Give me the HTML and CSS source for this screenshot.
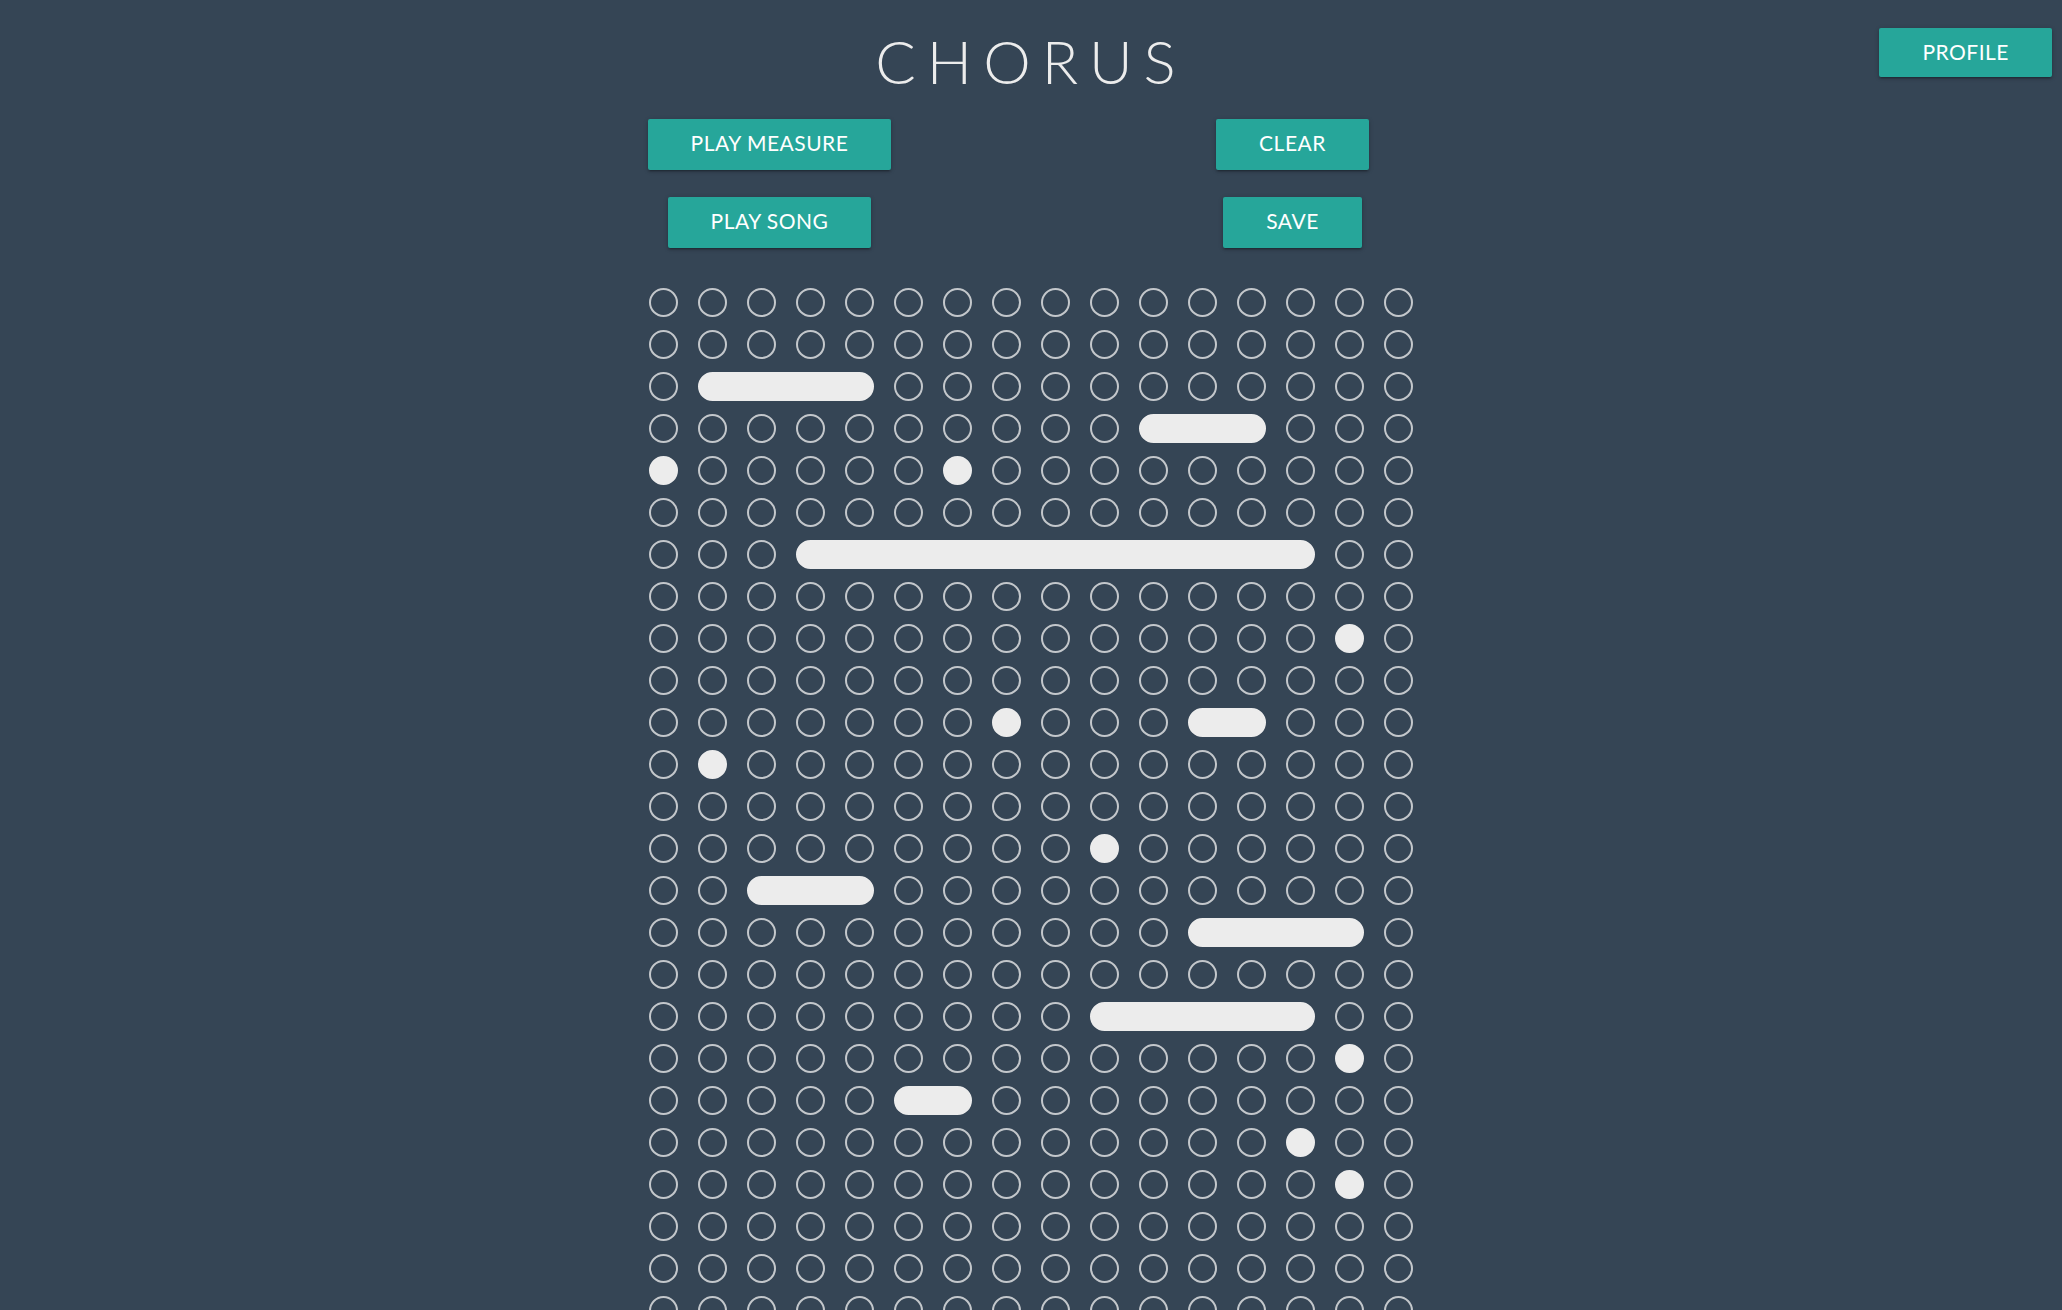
FILE: index.html
```html
<!DOCTYPE html>
<html lang="en">
<head>
<meta charset="utf-8">
<title>Chorus</title>
<link rel="stylesheet" href="styles.css">
</head>
<body>
<header class="top">
  <h1 class="title">CHORUS</h1>
  <button class="btn profile">Profile</button>
</header>

<section class="controls">
  <div class="col">
    <button class="btn">Play Measure</button>
    <button class="btn">Play Song</button>
  </div>
  <div class="col">
    <button class="btn">Clear</button>
    <button class="btn">Save</button>
  </div>
</section>

<main class="grid">
  <!-- row 0 -->
  <span class="dot"></span><span class="dot"></span><span class="dot"></span><span class="dot"></span><span class="dot"></span><span class="dot"></span><span class="dot"></span><span class="dot"></span><span class="dot"></span><span class="dot"></span><span class="dot"></span><span class="dot"></span><span class="dot"></span><span class="dot"></span><span class="dot"></span><span class="dot"></span>
  <!-- row 1 -->
  <span class="dot"></span><span class="dot"></span><span class="dot"></span><span class="dot"></span><span class="dot"></span><span class="dot"></span><span class="dot"></span><span class="dot"></span><span class="dot"></span><span class="dot"></span><span class="dot"></span><span class="dot"></span><span class="dot"></span><span class="dot"></span><span class="dot"></span><span class="dot"></span>
  <!-- row 2 -->
  <span class="dot"></span><span class="dot on s4"></span><span class="dot"></span><span class="dot"></span><span class="dot"></span><span class="dot"></span><span class="dot"></span><span class="dot"></span><span class="dot"></span><span class="dot"></span><span class="dot"></span><span class="dot"></span><span class="dot"></span>
  <!-- row 3 -->
  <span class="dot"></span><span class="dot"></span><span class="dot"></span><span class="dot"></span><span class="dot"></span><span class="dot"></span><span class="dot"></span><span class="dot"></span><span class="dot"></span><span class="dot"></span><span class="dot on s3"></span><span class="dot"></span><span class="dot"></span><span class="dot"></span>
  <!-- row 4 -->
  <span class="dot on"></span><span class="dot"></span><span class="dot"></span><span class="dot"></span><span class="dot"></span><span class="dot"></span><span class="dot on"></span><span class="dot"></span><span class="dot"></span><span class="dot"></span><span class="dot"></span><span class="dot"></span><span class="dot"></span><span class="dot"></span><span class="dot"></span><span class="dot"></span>
  <!-- row 5 -->
  <span class="dot"></span><span class="dot"></span><span class="dot"></span><span class="dot"></span><span class="dot"></span><span class="dot"></span><span class="dot"></span><span class="dot"></span><span class="dot"></span><span class="dot"></span><span class="dot"></span><span class="dot"></span><span class="dot"></span><span class="dot"></span><span class="dot"></span><span class="dot"></span>
  <!-- row 6 -->
  <span class="dot"></span><span class="dot"></span><span class="dot"></span><span class="dot on s11"></span><span class="dot"></span><span class="dot"></span>
  <!-- row 7 -->
  <span class="dot"></span><span class="dot"></span><span class="dot"></span><span class="dot"></span><span class="dot"></span><span class="dot"></span><span class="dot"></span><span class="dot"></span><span class="dot"></span><span class="dot"></span><span class="dot"></span><span class="dot"></span><span class="dot"></span><span class="dot"></span><span class="dot"></span><span class="dot"></span>
  <!-- row 8 -->
  <span class="dot"></span><span class="dot"></span><span class="dot"></span><span class="dot"></span><span class="dot"></span><span class="dot"></span><span class="dot"></span><span class="dot"></span><span class="dot"></span><span class="dot"></span><span class="dot"></span><span class="dot"></span><span class="dot"></span><span class="dot"></span><span class="dot on"></span><span class="dot"></span>
  <!-- row 9 -->
  <span class="dot"></span><span class="dot"></span><span class="dot"></span><span class="dot"></span><span class="dot"></span><span class="dot"></span><span class="dot"></span><span class="dot"></span><span class="dot"></span><span class="dot"></span><span class="dot"></span><span class="dot"></span><span class="dot"></span><span class="dot"></span><span class="dot"></span><span class="dot"></span>
  <!-- row 10 -->
  <span class="dot"></span><span class="dot"></span><span class="dot"></span><span class="dot"></span><span class="dot"></span><span class="dot"></span><span class="dot"></span><span class="dot on"></span><span class="dot"></span><span class="dot"></span><span class="dot"></span><span class="dot on s2"></span><span class="dot"></span><span class="dot"></span><span class="dot"></span>
  <!-- row 11 -->
  <span class="dot"></span><span class="dot on"></span><span class="dot"></span><span class="dot"></span><span class="dot"></span><span class="dot"></span><span class="dot"></span><span class="dot"></span><span class="dot"></span><span class="dot"></span><span class="dot"></span><span class="dot"></span><span class="dot"></span><span class="dot"></span><span class="dot"></span><span class="dot"></span>
  <!-- row 12 -->
  <span class="dot"></span><span class="dot"></span><span class="dot"></span><span class="dot"></span><span class="dot"></span><span class="dot"></span><span class="dot"></span><span class="dot"></span><span class="dot"></span><span class="dot"></span><span class="dot"></span><span class="dot"></span><span class="dot"></span><span class="dot"></span><span class="dot"></span><span class="dot"></span>
  <!-- row 13 -->
  <span class="dot"></span><span class="dot"></span><span class="dot"></span><span class="dot"></span><span class="dot"></span><span class="dot"></span><span class="dot"></span><span class="dot"></span><span class="dot"></span><span class="dot on"></span><span class="dot"></span><span class="dot"></span><span class="dot"></span><span class="dot"></span><span class="dot"></span><span class="dot"></span>
  <!-- row 14 -->
  <span class="dot"></span><span class="dot"></span><span class="dot on s3"></span><span class="dot"></span><span class="dot"></span><span class="dot"></span><span class="dot"></span><span class="dot"></span><span class="dot"></span><span class="dot"></span><span class="dot"></span><span class="dot"></span><span class="dot"></span><span class="dot"></span>
  <!-- row 15 -->
  <span class="dot"></span><span class="dot"></span><span class="dot"></span><span class="dot"></span><span class="dot"></span><span class="dot"></span><span class="dot"></span><span class="dot"></span><span class="dot"></span><span class="dot"></span><span class="dot"></span><span class="dot on s4"></span><span class="dot"></span>
  <!-- row 16 -->
  <span class="dot"></span><span class="dot"></span><span class="dot"></span><span class="dot"></span><span class="dot"></span><span class="dot"></span><span class="dot"></span><span class="dot"></span><span class="dot"></span><span class="dot"></span><span class="dot"></span><span class="dot"></span><span class="dot"></span><span class="dot"></span><span class="dot"></span><span class="dot"></span>
  <!-- row 17 -->
  <span class="dot"></span><span class="dot"></span><span class="dot"></span><span class="dot"></span><span class="dot"></span><span class="dot"></span><span class="dot"></span><span class="dot"></span><span class="dot"></span><span class="dot on s5"></span><span class="dot"></span><span class="dot"></span>
  <!-- row 18 -->
  <span class="dot"></span><span class="dot"></span><span class="dot"></span><span class="dot"></span><span class="dot"></span><span class="dot"></span><span class="dot"></span><span class="dot"></span><span class="dot"></span><span class="dot"></span><span class="dot"></span><span class="dot"></span><span class="dot"></span><span class="dot"></span><span class="dot on"></span><span class="dot"></span>
  <!-- row 19 -->
  <span class="dot"></span><span class="dot"></span><span class="dot"></span><span class="dot"></span><span class="dot"></span><span class="dot on s2"></span><span class="dot"></span><span class="dot"></span><span class="dot"></span><span class="dot"></span><span class="dot"></span><span class="dot"></span><span class="dot"></span><span class="dot"></span><span class="dot"></span>
  <!-- row 20 -->
  <span class="dot"></span><span class="dot"></span><span class="dot"></span><span class="dot"></span><span class="dot"></span><span class="dot"></span><span class="dot"></span><span class="dot"></span><span class="dot"></span><span class="dot"></span><span class="dot"></span><span class="dot"></span><span class="dot"></span><span class="dot on"></span><span class="dot"></span><span class="dot"></span>
  <!-- row 21 -->
  <span class="dot"></span><span class="dot"></span><span class="dot"></span><span class="dot"></span><span class="dot"></span><span class="dot"></span><span class="dot"></span><span class="dot"></span><span class="dot"></span><span class="dot"></span><span class="dot"></span><span class="dot"></span><span class="dot"></span><span class="dot"></span><span class="dot on"></span><span class="dot"></span>
  <!-- row 22 -->
  <span class="dot"></span><span class="dot"></span><span class="dot"></span><span class="dot"></span><span class="dot"></span><span class="dot"></span><span class="dot"></span><span class="dot"></span><span class="dot"></span><span class="dot"></span><span class="dot"></span><span class="dot"></span><span class="dot"></span><span class="dot"></span><span class="dot"></span><span class="dot"></span>
  <!-- row 23 -->
  <span class="dot"></span><span class="dot"></span><span class="dot"></span><span class="dot"></span><span class="dot"></span><span class="dot"></span><span class="dot"></span><span class="dot"></span><span class="dot"></span><span class="dot"></span><span class="dot"></span><span class="dot"></span><span class="dot"></span><span class="dot"></span><span class="dot"></span><span class="dot"></span>
  <!-- row 24 -->
  <span class="dot"></span><span class="dot"></span><span class="dot"></span><span class="dot"></span><span class="dot"></span><span class="dot"></span><span class="dot"></span><span class="dot"></span><span class="dot"></span><span class="dot"></span><span class="dot"></span><span class="dot"></span><span class="dot"></span><span class="dot"></span><span class="dot"></span><span class="dot"></span>
  <!-- row 25 -->
  <span class="dot"></span><span class="dot"></span><span class="dot"></span><span class="dot"></span><span class="dot"></span><span class="dot"></span><span class="dot"></span><span class="dot"></span><span class="dot"></span><span class="dot"></span><span class="dot"></span><span class="dot"></span><span class="dot"></span><span class="dot"></span><span class="dot"></span><span class="dot"></span>
</main>
</body>
</html>
```
FILE: styles.css
```css
* {
  box-sizing: border-box;
}

body {
  margin: 0;
  background: #354555;
  font-family: Lato, "Open Sans", "Liberation Sans", sans-serif;
  color: #eeeeee;
}

.top {
  position: relative;
  padding-top: 25px;
}

.title {
  margin: 0;
  text-align: center;
  font-size: 60px;
  font-weight: 300;
  line-height: 72px;
  letter-spacing: 11px;
  color: #ececec;
}

.btn {
  height: 51px;
  padding: 0 43px 3px;
  border: none;
  border-radius: 2px;
  background: #26a69a;
  color: #ffffff;
  font-family: Lato, "Open Sans", "Liberation Sans", sans-serif;
  font-size: 21px;
  font-weight: 400;
  line-height: 48px;
  letter-spacing: 0.5px;
  text-transform: uppercase;
  box-shadow: 0 2px 2px 0 rgba(0, 0, 0, 0.14),
              0 3px 1px -2px rgba(0, 0, 0, 0.12),
              0 1px 5px 0 rgba(0, 0, 0, 0.2);
  cursor: pointer;
}

.profile {
  position: absolute;
  top: 28px;
  right: 10px;
  height: 49px;
  padding-bottom: 1px;
}

.controls {
  display: flex;
  justify-content: center;
  margin-top: 22px;
}

.col {
  width: 523px;
  display: flex;
  flex-direction: column;
  align-items: center;
  gap: 27px;
}

.grid {
  width: 764px;
  margin: 40px auto 0;
  display: grid;
  grid-template-columns: repeat(16, 29px);
  grid-auto-rows: 29px;
  column-gap: 20px;
  row-gap: 13px;
  padding-bottom: 40px;
}

.dot {
  display: block;
  height: 29px;
  border: 2px solid #c3c7cb;
  border-radius: 15px;
}

.dot.on {
  background: #ececec;
  border-color: #ececec;
}

.s2 { grid-column: span 2; }
.s3 { grid-column: span 3; }
.s4 { grid-column: span 4; }
.s5 { grid-column: span 5; }
.s11 { grid-column: span 11; }
```
